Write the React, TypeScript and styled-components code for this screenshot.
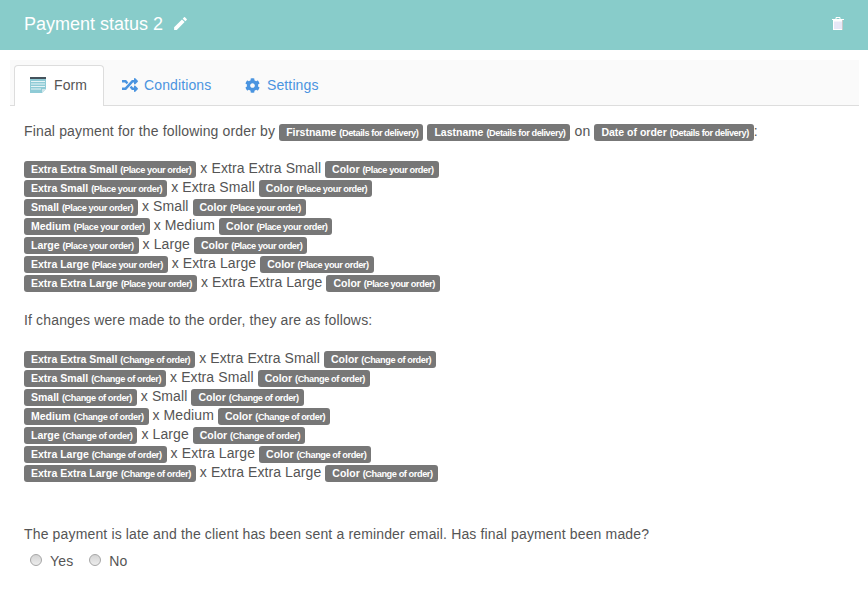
import React from "react"
import styled, { createGlobalStyle } from "styled-components"
import { FaRandom, FaCog } from "react-icons/fa"
import { MdEdit } from "react-icons/md"

const Global = createGlobalStyle`
	html, body {
		margin: 0;
		padding: 0;
		background: #fff;
		font-family: "Liberation Sans", Arial, sans-serif;
		font-size: 14px;
		color: #555;
	}
`

const Header = styled.header`
	display: flex;
	align-items: center;
	justify-content: space-between;
	height: 50px;
	padding: 0 24px 3px 24px;
	box-sizing: border-box;
	background: #88ccca;
	color: #fff;
`

const Title = styled.h1`
	display: flex;
	align-items: center;
	gap: 9px;
	margin: 0;
	font-size: 18px;
	font-weight: 400;
	line-height: 20px;
`

const Tabs = styled.nav`
	display: flex;
	height: 46px;
	margin: 10px 9px 0 10px;
	padding: 5px 0 0 4px;
	box-sizing: border-box;
	background: #fafafa;
	border-bottom: 1px solid #ddd;
`

const Tab = styled.a<{ $active?: boolean; $width: number; $gap: number }>`
	display: flex;
	align-items: center;
	gap: ${p => p.$gap}px;
	width: ${p => p.$width}px;
	height: 41px;
	box-sizing: border-box;
	padding: 0 0 2px ${p => (p.$active ? 15 : 17)}px;
	font-size: 14px;
	letter-spacing: 0.12px;
	color: ${p => (p.$active ? "#555" : "#4a94e0")};
	background: ${p => (p.$active ? "#fff" : "transparent")};
	border: 1px solid ${p => (p.$active ? "#ddd" : "transparent")};
	border-bottom: 0;
	border-radius: 4px 4px 0 0;
`

const Body = styled.main`
	padding: 16px 24px 0;
	letter-spacing: 0.15px;
`

const Line = styled.div`
	height: 19px;
	line-height: 19px;
	white-space: nowrap;
`

const SizeLine = styled(Line)`
	letter-spacing: 0.09px;
`

const Gap = styled.div<{ $size: number }>`
	height: ${p => p.$size}px;
`

const Label = styled.span`
	display: inline-block;
	height: 17px;
	padding: 0 5px 0 7px;
	box-sizing: border-box;
	vertical-align: 0;
	line-height: 17px;
	background: #777;
	border-radius: 3px;
	color: #fff;
	font-size: 10.5px;
	font-weight: 700;
	letter-spacing: 0;
`

const Small = styled.small`
	font-size: 9.2px;
	letter-spacing: -0.42px;
`

const Radios = styled.div`
	display: flex;
	align-items: center;
	gap: 16px;
	margin: 7px 0 0 6px;
`

const Radio = styled.label`
	display: flex;
	align-items: center;
	gap: 8px;
	line-height: 20px;
`

const Dot = styled.span`
	width: 12px;
	height: 12px;
	box-sizing: border-box;
	margin-top: -2px;
	border: 1px solid #a6a6a6;
	border-radius: 50%;
	background: linear-gradient(#d4d4d4, #ededed);
`

const FormIcon = () => (
	<svg width="16" height="17" viewBox="0 0 16 17">
		<rect x="0" y="0" width="16" height="2" fill="#44525c" />
		<path d="M0 2h16v10l-4 4H0z" fill="#8fcbd6" />
		<path d="M1 4.500h14M1 7h14M1 9.500h14M1 12h10" stroke="#e6f4f6" strokeWidth="1" />
		<path d="M12 16v-4h4z" fill="#cfe6ea" />
	</svg>
)

const TrashIcon = () => (
	<svg width="12" height="14" viewBox="0 0 12 14">
		<path d="M4 2V.5h4V2" fill="none" stroke="#fff" />
		<rect x="0" y="2" width="12" height="1" fill="#fff" />
		<rect x="1" y="3" width="10" height="10" fill="#fff" />
		<path d="M3 4.500v7.500M5 4.500v7.500M7 4.500v7.500M9 4.500v7.500" stroke="#cfd0ee" />
		<rect x="10" y="3" width="1" height="10" fill="#c8c8c8" />
	</svg>
)

const sizes = [
	"Extra Extra Small",
	"Extra Small",
	"Small",
	"Medium",
	"Large",
	"Extra Large",
	"Extra Extra Large",
]

const Tag = ({ name, from }: { name: string; from: string }) => (
	<Label>
		{name} <Small>({from})</Small>
	</Label>
)

const SizeRows = ({ from }: { from: string }) => (
	<>
		{sizes.map(size => (
			<SizeLine key={size}>
				<Tag name={size} from={from} /> x {size} <Tag name="Color" from={from} />
			</SizeLine>
		))}
	</>
)

export default function App() {
	return (
		<>
			<Global />
			<Header>
				<Title>
					Payment status 2 <MdEdit size={17} />
				</Title>
				<TrashIcon />
			</Header>
			<Tabs>
				<Tab $active $width={90} $gap={8}>
					<FormIcon /> Form
				</Tab>
				<Tab $width={123} $gap={6}>
					<FaRandom size={16} /> Conditions
				</Tab>
				<Tab $width={110} $gap={7}>
					<FaCog size={15} /> Settings
				</Tab>
			</Tabs>
			<Body>
				<Line>
					Final payment for the following order by <Tag name="Firstname" from="Details for delivery" />{" "}
					<Tag name="Lastname" from="Details for delivery" /> on{" "}
					<Tag name="Date of order" from="Details for delivery" />:
				</Line>
				<Gap $size={18} />
				<SizeRows from="Place your order" />
				<Gap $size={19} />
				<Line>If changes were made to the order, they are as follows:</Line>
				<Gap $size={19} />
				<SizeRows from="Change of order" />
				<Gap $size={43} />
				<Line>The payment is late and the client has been sent a reminder email. Has final payment been made?</Line>
				<Radios>
					<Radio>
						<Dot /> Yes
					</Radio>
					<Radio>
						<Dot /> No
					</Radio>
				</Radios>
			</Body>
		</>
	)
}
